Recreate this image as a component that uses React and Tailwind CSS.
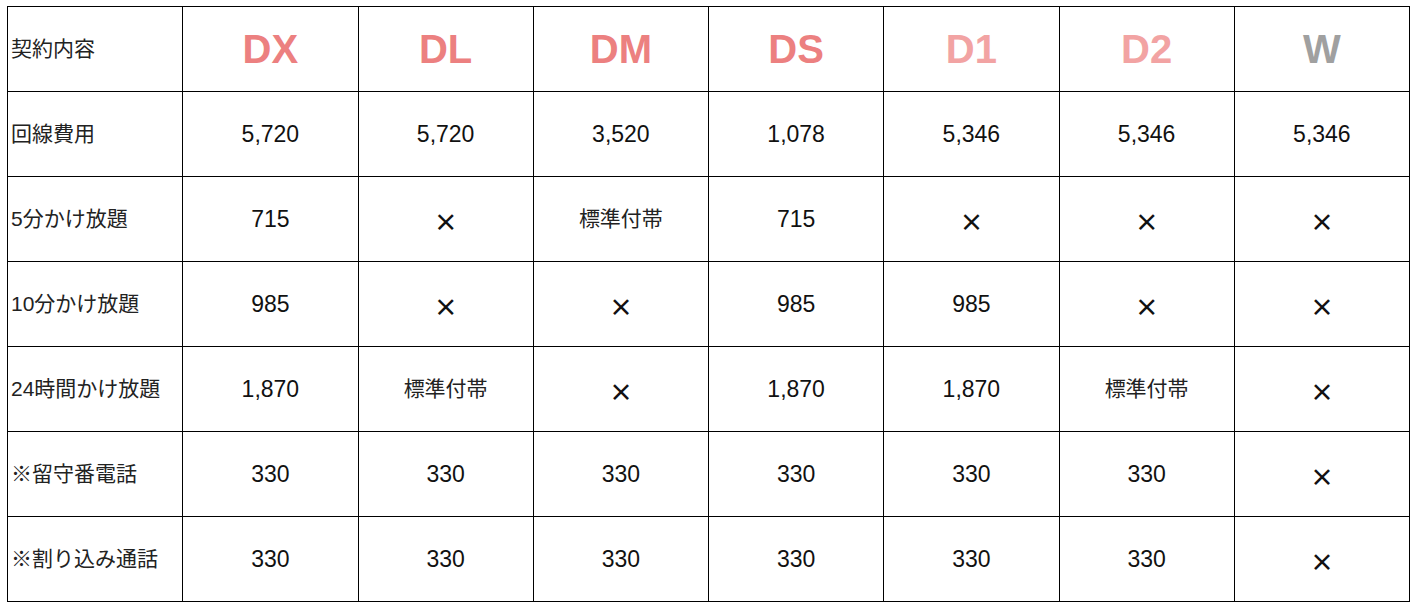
import React from 'react';

const plans = [
  { name: 'DX', color: 'text-[#ec8080]' },
  { name: 'DL', color: 'text-[#ec8080]' },
  { name: 'DM', color: 'text-[#ec8080]' },
  { name: 'DS', color: 'text-[#ec8080]' },
  { name: 'D1', color: 'text-[#f2a3a3]' },
  { name: 'D2', color: 'text-[#f2a3a3]' },
  { name: 'W', color: 'text-[#a0a0a0]' },
];

const X = '×';
const STD = '標準付帯';

const rows = [
  ['回線費用', ['5,720', '5,720', '3,520', '1,078', '5,346', '5,346', '5,346']],
  ['5分かけ放題', ['715', X, STD, '715', X, X, X]],
  ['10分かけ放題', ['985', X, X, '985', '985', X, X]],
  ['24時間かけ放題', ['1,870', STD, X, '1,870', '1,870', STD, X]],
  ['※留守番電話', ['330', '330', '330', '330', '330', '330', X]],
  ['※割り込み通話', ['330', '330', '330', '330', '330', '330', X]],
];

const Cell = ({ value }) => {
  if (value === X) {
    return (
      <span className="inline-block pt-[8px] font-['Noto_Sans_CJK_JP',sans-serif] text-[24px] font-bold leading-none">
        ×
      </span>
    );
  }
  if (value === STD) {
    return <span className="text-[21px] text-[#222]">{value}</span>;
  }
  return <span className="text-[23px]">{value}</span>;
};

export default function App() {
  return (
    <div className="min-h-screen bg-white pl-[7px] pt-[6px] font-['Liberation_Sans','Noto_Sans_CJK_JP',sans-serif] text-[#111]">
      <table className="w-[1403px] table-fixed border-collapse">
        <tbody>
          <tr className="h-[85px]">
            <td className="border border-black px-[3px] text-[21px] text-[#222]">契約内容</td>
            {plans.map((p) => (
              <td key={p.name} className={`border border-black text-center text-[40px] font-bold ${p.color}`}>
                {p.name}
              </td>
            ))}
          </tr>
          {rows.map(([label, values]) => (
            <tr key={label} className="h-[85px]">
              <td className="border border-black px-[3px] text-[21px] text-[#222]">{label}</td>
              {values.map((v, i) => (
                <td key={i} className="border border-black text-center">
                  <Cell value={v} />
                </td>
              ))}
            </tr>
          ))}
        </tbody>
      </table>
    </div>
  );
}
